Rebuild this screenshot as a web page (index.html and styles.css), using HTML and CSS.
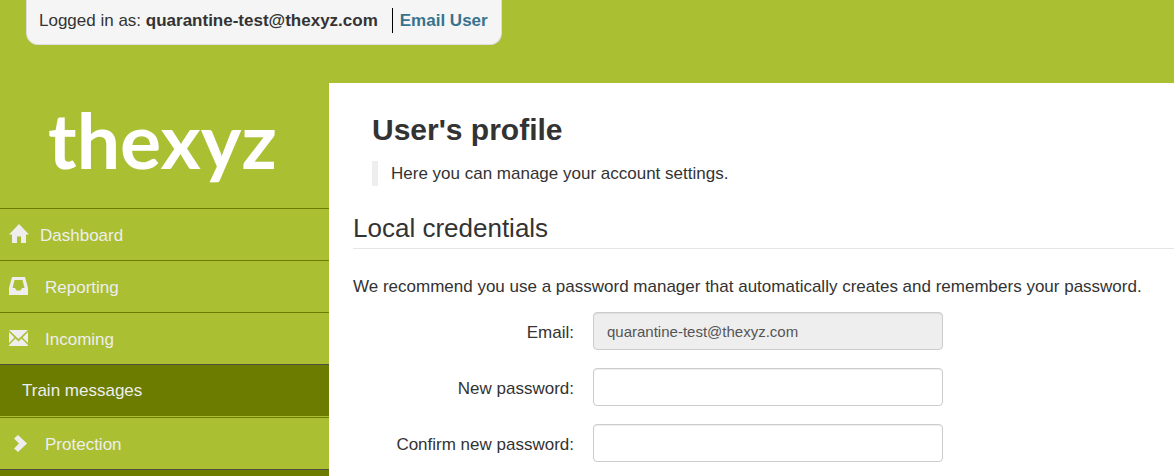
FILE: index.html
```html
<!DOCTYPE html>
<html lang="en">
<head>
  <title>User's profile</title>
  <meta charset="utf-8">
  <meta name="viewport" content="width=device-width, initial-scale=1.0">
  <link rel="stylesheet" href="styles.css">
</head>
<body>
  <header class="header">
    <div class="login-box">
      <span>Logged in as: <strong>quarantine-test@thexyz.com</strong></span>
      <a class="role" href="#">Email User</a>
    </div>
  </header>

  <div class="page">
    <aside class="sidebar">
      <a class="logo" href="#">thexyz</a>
      <nav class="menu">
        <a class="menu-item" href="#">
          <svg class="icon" viewBox="0 0 20 20"><path d="M10 0L20 10.500H17V19H12V12.500H8V19H3V10.500H0Z"/></svg>
          Dashboard
        </a>
        <a class="menu-item" href="#">
          <svg class="icon" viewBox="0 0 20 20"><path fill-rule="evenodd" d="M3 1H16L19 12V19H0V12ZM5.500 4L3.500 12H6L7.500 14.500H11.500L13 12H15.500L13.500 4Z"/></svg>
          Reporting
        </a>
        <a class="menu-item" href="#">
          <svg class="icon" viewBox="0 0 20 20"><path d="M0 2H19L9.500 11ZM0 4L5.500 9.500L0 15ZM19 4L13.500 9.500L19 15ZM6.500 10.500L9.500 13.500L12.500 10.500L19 17V18H0V17Z"/></svg>
          Incoming
        </a>
        <a class="submenu-item" href="#">Train messages</a>
        <a class="menu-item" href="#">
          <svg class="icon" viewBox="0 0 20 20"><path d="M9 2L18 10.500L9 19L5 15.500L10 10.500L5 5.500Z"/></svg>
          Protection
        </a>
        <a class="submenu-item" href="#" aria-label="Protection settings"></a>
      </nav>
    </aside>

    <main class="content">
      <h1>User's profile</h1>
      <blockquote>Here you can manage your account settings.</blockquote>

      <form>
        <h2>Local credentials</h2>
        <p>We recommend you use a password manager that automatically creates and remembers your password.</p>
        <div class="form-row">
          <label for="email">Email:</label>
          <input type="text" id="email" value="quarantine-test@thexyz.com" disabled>
        </div>
        <div class="form-row">
          <label for="password">New password:</label>
          <input type="password" id="password">
        </div>
        <div class="form-row">
          <label for="confirm">Confirm new password:</label>
          <input type="password" id="confirm">
        </div>
      </form>
    </main>
  </div>
</body>
</html>
```

FILE: styles.css
```css
* {
  box-sizing: border-box;
}
body {
  margin: 0;
  font-family: "Liberation Sans", Arial, sans-serif;
  font-size: 17px;
  line-height: 25px;
  color: #333;
  background-color: #aabf32;
}
a {
  text-decoration: none;
}
.header {
  display: flex;
  align-items: flex-start;
  height: 83px;
  padding-left: 26px;
}
.login-box {
  display: flex;
  padding: 8px 13px 11px 12px;
  background-color: #f5f5f5;
  border: 1px solid #ddd;
  border-top: 0;
  border-radius: 0 0 12px 12px;
}
.role {
  margin-left: 14px;
  padding-left: 7px;
  border-left: 1px solid #000;
  color: #37738f;
  font-weight: bold;
}
.page {
  display: flex;
  align-items: stretch;
}
.sidebar {
  flex: 0 0 329px;
}
.logo {
  display: block;
  height: 125px;
  padding-left: 48px;
  font-family: Lato, sans-serif;
  font-size: 77px;
  font-weight: bold;
  line-height: 112px;
  color: #fff;
}
.menu-item {
  display: flex;
  align-items: center;
  gap: 16px;
  height: 52px;
  padding-top: 1px;
  padding-left: 9px;
  border-top: 1px solid #6b7c00;
  color: #eee;
}
.menu-item:first-child {
  gap: 11px;
}
.icon {
  width: 20px;
  height: 20px;
  margin-bottom: 3px;
  fill: #eee;
}
.submenu-item {
  display: block;
  height: 53px;
  padding: 13px 22px;
  background-color: #6b7c00;
  border-top: 1px solid #505040;
  border-bottom: 1px solid #aabf32;
  color: #eee;
}
.submenu-item:last-child {
  height: 8px;
  padding: 0;
  border-bottom: 0;
}
.content {
  flex: 1;
  min-width: 0;
  padding: 29px 0 14px 24px;
  background-color: #fff;
}
h1 {
  margin: 0 0 14px 19px;
  font-size: 30px;
  line-height: 35px;
}
blockquote {
  margin: 0 0 24px 19px;
  padding-left: 13px;
  border-left: 6px solid #eee;
}
h2 {
  margin: 0 0 25px;
  padding-bottom: 2px;
  border-bottom: 1px solid #e5e5e5;
  font-size: 26px;
  font-weight: normal;
  line-height: 36px;
}
p {
  margin: 0 0 13px;
}
.form-row {
  display: flex;
  align-items: flex-start;
  margin-bottom: 18px;
}
.form-row:last-child {
  margin-bottom: 0;
}
.form-row label {
  width: 221px;
  padding-top: 8px;
  text-align: right;
}
.form-row input {
  width: 350px;
  height: 38px;
  margin-left: 19px;
  padding: 0 13px;
  border: 1px solid #ccc;
  border-radius: 4px;
  box-shadow: inset 0 1px 1px rgba(0,0,0,0.07);
  font-family: inherit;
  font-size: 15px;
  color: #555;
}
.form-row input:disabled {
  background-color: #eee;
}
@media (max-width: 800px) {
  .page {
    flex-direction: column;
  }
  .sidebar {
    flex: none;
  }
  .form-row {
    flex-wrap: wrap;
  }
}
```
